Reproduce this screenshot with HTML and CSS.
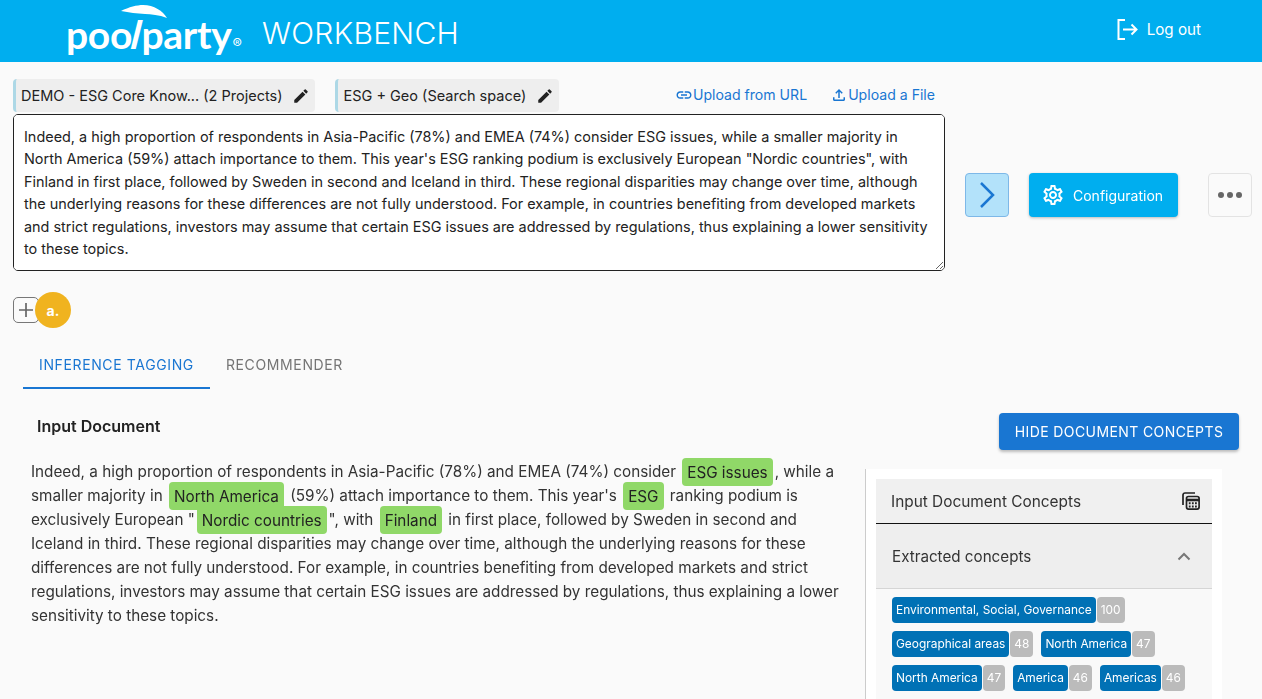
FILE: index.html
```html
<!DOCTYPE html>
<html lang="en">
<head>
    <meta charset="UTF-8">
    <meta name="viewport" content="width=device-width, initial-scale=1.0">
    <title>PoolParty Workbench</title>
    <link rel="stylesheet" href="styles.css">
</head>
<body>
    <header class="topbar">
        <div class="logo">
            <svg class="logo-umbrella" width="48" height="18" viewBox="0 0 48 18"><path d="M0 7C8 3 16 1 22 1 33 1 42 7 46 14 38 11 30 10 24 10 16 9.500 8 8.500 0 7Z" fill="#fff"/></svg>
            <span class="logo-text">poo<span class="logo-pole">l</span>party</span><span class="logo-reg">®</span>
        </div>
        <div class="app-name">WORKBENCH</div>
        <a class="logout" href="#">
            <svg width="21" height="21" viewBox="0 0 21 21" fill="none" stroke="#fff" stroke-width="2"><path d="M8 1H1.500v19H8"/><path d="M6 10.500h13.500M14.500 5.500l5 5-5 5"/></svg>
            Log out
        </a>
    </header>

    <section class="input-area">
        <div class="input-left">
            <div class="toolbar">
                <div class="chip chip-first">
                    <span>DEMO - ESG Core Know... (2 Projects)</span>
                    <svg width="18" height="18" viewBox="0 0 24 24"><path d="M3 17.250V21h3.750L17.810 9.940l-3.750-3.750L3 17.250zM20.710 7.040a1 1 0 0 0 0-1.410l-2.340-2.340a1 1 0 0 0-1.410 0l-1.830 1.830 3.750 3.750 1.830-1.830z" fill="#222"/></svg>
                </div>
                <div class="chip">
                    <span>ESG + Geo (Search space)</span>
                    <svg width="18" height="18" viewBox="0 0 24 24"><path d="M3 17.250V21h3.750L17.810 9.940l-3.750-3.750L3 17.250zM20.710 7.040a1 1 0 0 0 0-1.410l-2.340-2.340a1 1 0 0 0-1.410 0l-1.830 1.830 3.750 3.750 1.830-1.830z" fill="#222"/></svg>
                </div>
                <a class="upload-link upload-link-first" href="#">
                    <svg width="18" height="18" viewBox="0 0 24 24"><path d="M3.900 12c0-1.710 1.390-3.100 3.100-3.100h4V7H7c-2.760 0-5 2.240-5 5s2.240 5 5 5h4v-1.900H7c-1.710 0-3.100-1.390-3.100-3.100zM8 13h8v-2H8v2zm9-6h-4v1.900h4c1.710 0 3.100 1.390 3.100 3.100s-1.390 3.100-3.100 3.100h-4V17h4c2.760 0 5-2.240 5-5s-2.240-5-5-5z" fill="#1976d2"/></svg>Upload from URL
                </a>
                <a class="upload-link" href="#">
                    <svg width="18" height="18" viewBox="0 0 24 24"><path d="M18 15v3H6v-3H4v3c0 1.100.9 2 2 2h12c1.100 0 2-.9 2-2v-3h-2zM7 9l1.410 1.410L11 7.830V16h2V7.830l2.590 2.580L17 9l-5-5-5 5z" fill="#1976d2"/></svg>Upload a File
                </a>
            </div>
            <textarea class="doc-input" spellcheck="false">Indeed, a high proportion of respondents in Asia-Pacific (78%) and EMEA (74%) consider ESG issues, while a smaller majority in North America (59%) attach importance to them. This year's ESG ranking podium is exclusively European "Nordic countries", with Finland in first place, followed by Sweden in second and Iceland in third. These regional disparities may change over time, although the underlying reasons for these differences are not fully understood. For example, in countries benefiting from developed markets and strict regulations, investors may assume that certain ESG issues are addressed by regulations, thus explaining a lower sensitivity to these topics.</textarea>
        </div>
        <div class="input-actions">
            <button class="btn-next" type="button">
                <svg width="18" height="28" viewBox="0 0 18 28" fill="none" stroke="#1976d2" stroke-width="2.500"><path d="M3 2l12 12L3 26"/></svg>
            </button>
            <button class="btn-config" type="button">
                <svg width="24" height="24" viewBox="0 0 24 24"><path d="M19.430 12.980c.04-.32.07-.64.07-.98 0-.34-.03-.66-.07-.98l2.110-1.650c.19-.15.24-.42.12-.64l-2-3.460c-.12-.22-.39-.3-.61-.22l-2.490 1c-.52-.4-1.080-.73-1.690-.98l-.38-2.650A.488.488 0 0 0 14 2h-4c-.25 0-.46.18-.49.42l-.38 2.650c-.61.25-1.170.59-1.690.98l-2.490-1a.566.566 0 0 0-.18-.03c-.17 0-.34.09-.43.25l-2 3.460c-.13.22-.07.49.12.64l2.110 1.650c-.04.32-.07.65-.07.98 0 .33.03.66.07.98l-2.110 1.650c-.19.15-.24.42-.12.64l2 3.460c.12.22.39.3.61.22l2.490-1c.52.4 1.080.73 1.690.98l.38 2.650c.03.24.24.42.49.42h4c.25 0 .46-.18.49-.42l.38-2.650c.61-.25 1.170-.59 1.690-.98l2.490 1c.06.02.12.03.18.03.17 0 .34-.09.43-.25l2-3.460c.12-.22.07-.49-.12-.64l-2.110-1.650zm-1.980-1.710c.04.31.05.52.05.73 0 .21-.02.43-.05.73l-.14 1.130.89.7 1.080.84-.7 1.210-1.270-.51-1.040-.42-.9.68c-.43.32-.84.56-1.250.73l-1.060.43-.16 1.130-.2 1.350h-1.400l-.19-1.350-.16-1.130-1.060-.43c-.43-.18-.83-.41-1.230-.71l-.91-.7-1.060.43-1.270.51-.7-1.210 1.080-.84.89-.7-.14-1.130c-.03-.31-.05-.54-.05-.74s.02-.43.05-.73l.14-1.130-.89-.7-1.080-.84.7-1.210 1.270.51 1.040.42.9-.68c.43-.32.84-.56 1.250-.73l1.060-.43.16-1.130.2-1.350h1.390l.19 1.350.16 1.130 1.060.43c.43.18.83.41 1.230.71l.91.7 1.060-.43 1.270-.51.7 1.210-1.070.85-.89.7.14 1.130zM12 8c-2.210 0-4 1.790-4 4s1.790 4 4 4 4-1.790 4-4-1.790-4-4-4zm0 6c-1.100 0-2-.9-2-2s.9-2 2-2 2 .9 2 2-.9 2-2 2z" fill="#fff"/></svg>
                Configuration
            </button>
            <button class="btn-more" type="button">
                <span class="dot"></span><span class="dot"></span><span class="dot"></span>
            </button>
        </div>
    </section>

    <div class="add-row">
        <button class="btn-add" type="button">
            <svg width="16" height="16" viewBox="0 0 16 16" stroke="#666" stroke-width="1.700"><path d="M8 1v14M1 8h14"/></svg>
        </button>
        <span class="badge">a.</span>
    </div>

    <nav class="tabs">
        <a class="tab tab-active" href="#">Inference Tagging</a>
        <a class="tab" href="#">Recommender</a>
    </nav>

    <section class="results">
        <div class="results-head">
            <h3>Input Document</h3>
            <button class="btn-hide" type="button">Hide Document Concepts</button>
        </div>
        <div class="results-body">
            <p class="doc-text">Indeed, a high proportion of respondents in Asia-Pacific (78%) and EMEA (74%) consider <mark>ESG issues</mark>, while a smaller majority in <mark>North America</mark> (59%) attach importance to them. This year's <mark>ESG</mark> ranking podium is exclusively European "<mark>Nordic countries</mark>", with <mark>Finland</mark> in first place, followed by Sweden in second and Iceland in third. These regional disparities may change over time, although the underlying reasons for these differences are not fully understood. For example, in countries benefiting from developed markets and strict regulations, investors may assume that certain ESG issues are addressed by regulations, thus explaining a lower sensitivity to these topics.</p>
            <aside class="concepts">
                <div class="concepts-title">
                    <span>Input Document Concepts</span>
                    <svg width="18" height="18" viewBox="0 0 18 18" fill="none" stroke="#222" stroke-width="1.700"><path d="M1 13V3a2 2 0 0 1 2-2h10"/><rect x="4.500" y="4.500" width="12.600" height="12.600" rx="2"/><path d="M4.500 8h12.600" stroke-width="2.600"/><path d="M6.800 11.300h1.800M9.900 11.300h1.800M13 11.300h1.800M6.800 14.500h1.800M9.900 14.500h1.800M13 14.500h1.800" stroke-width="2"/></svg>
                </div>
                <div class="concepts-section">
                    <span>Extracted concepts</span>
                    <svg width="14" height="9" viewBox="0 0 14 9" fill="none" stroke="#777" stroke-width="2"><path d="M1.500 7.500L7 2l5.500 5.500"/></svg>
                </div>
                <div class="tag-list">
                    <div class="tag"><span class="tag-name">Environmental, Social, Governance</span><span class="tag-count">100</span></div>
                    <div class="tag"><span class="tag-name">Geographical areas</span><span class="tag-count">48</span></div>
                    <div class="tag"><span class="tag-name">North America</span><span class="tag-count">47</span></div>
                    <div class="tag"><span class="tag-name">North America</span><span class="tag-count">47</span></div>
                    <div class="tag"><span class="tag-name">America</span><span class="tag-count">46</span></div>
                    <div class="tag"><span class="tag-name">Americas</span><span class="tag-count">46</span></div>
                </div>
            </aside>
        </div>
    </section>
</body>
</html>
```

FILE: styles.css
```css
html, body {
    height: 100%;
    overflow: hidden;
}

body {
    margin: 0;
    background-color: #fafafa;
    font-family: Inter, "Liberation Sans", sans-serif;
    color: #222;
}

a {
    text-decoration: none;
}

button {
    font-family: inherit;
    cursor: pointer;
}

/* Header */
.topbar {
    height: 62px;
    background-color: #00aeef;
    display: flex;
    align-items: center;
    padding-left: 68px;
    color: #fff;
}

.logo {
    position: relative;
    display: flex;
    align-items: baseline;
    width: 194px;
    height: 62px;
}

.logo-umbrella {
    position: absolute;
    left: 53px;
    top: 4px;
}

.logo-text {
    margin-left: -2px;
    font-family: Lato, sans-serif;
    font-weight: 700;
    font-size: 39px;
    line-height: 68px;
    letter-spacing: -0.3px;
}

.logo-pole {
    display: inline-block;
    transform: skewX(-14deg);
}

.logo-reg {
    font-size: 14px;
    margin-left: 1px;
}

.app-name {
    font-size: 30px;
    font-weight: 300;
    letter-spacing: 0.3px;
    margin-top: 3px;
}

.logout {
    margin-left: auto;
    margin-right: 61px;
    margin-top: -4px;
    display: flex;
    align-items: center;
    gap: 9px;
    color: #fff;
    font-size: 15.2px;
}

/* Input area */
.input-area {
    display: flex;
    padding: 17px 10px 0 13px;
}

.input-left {
    width: 932px;
}

.toolbar {
    display: flex;
    align-items: center;
    height: 33px;
    margin-bottom: 2px;
}

.chip {
    height: 33px;
    box-sizing: border-box;
    display: flex;
    align-items: center;
    justify-content: space-between;
    gap: 10px;
    padding: 0 5px 0 5px;
    background-color: #eee;
    border-left: 3px solid #add8e6;
    border-radius: 4px;
    font-size: 14.500px;
    margin-right: 20px;
}

.upload-link {
    display: flex;
    align-items: center;
    color: #1976d2;
    font-size: 14.100px;
    margin-top: -2px;
    margin-right: 23px;
}

.upload-link:last-child {
    margin-right: 10px;
}

.upload-link-first {
    margin-left: auto;
}

.doc-input {
    display: block;
    width: 100%;
    height: 157px;
    box-sizing: border-box;
    padding: 11px 10px;
    border: 1px solid #222;
    border-radius: 5px;
    background-color: #fff;
    font-family: inherit;
    font-size: 14.430px;
    line-height: 22.4px;
    color: #222;
    outline: none;
}

.input-actions {
    display: flex;
    align-self: flex-end;
    margin-left: 20px;
    margin-bottom: 54px;
}

.btn-next,
.btn-config,
.btn-more {
    height: 44px;
    box-sizing: border-box;
    border-radius: 4px;
    display: flex;
    align-items: center;
    justify-content: center;
    padding: 0;
}

.btn-next {
    width: 44px;
    background-color: #b3e2fa;
    border: 1px solid #7db8e8;
}

.btn-config {
    width: 149px;
    margin-left: 20px;
    padding-left: 12px;
    justify-content: flex-start;
    gap: 8px;
    background-color: #00aeef;
    border: none;
    color: #fff;
    font-size: 14px;
    box-shadow: 0 1px 3px rgba(0, 0, 0, 0.25);
}

.btn-more {
    width: 44px;
    margin-left: 30px;
    gap: 3px;
    background-color: #fafafa;
    border: 1px solid #e3e3e3;
}

.dot {
    width: 6px;
    height: 6px;
    border-radius: 50%;
    background-color: #666;
}

/* Add row */
.add-row {
    position: relative;
    margin: 26px 0 0 13px;
    height: 26px;
}

.btn-add {
    width: 26px;
    height: 26px;
    padding: 0;
    box-sizing: border-box;
    display: flex;
    align-items: center;
    justify-content: center;
    background-color: #fafafa;
    border: 1px solid #777;
    border-radius: 5px;
}

.badge {
    position: absolute;
    left: 22px;
    top: -5px;
    width: 36px;
    height: 36px;
    border-radius: 50%;
    background-color: #f0b31f;
    color: #fff;
    font-size: 14px;
    font-weight: 700;
    display: flex;
    align-items: center;
    justify-content: center;
}

/* Tabs */
.tabs {
    display: flex;
    margin: 18px 0 0 23px;
}

.tab {
    height: 48px;
    box-sizing: border-box;
    padding: 0 16px;
    display: flex;
    align-items: center;
    text-transform: uppercase;
    font-size: 14px;
    letter-spacing: 0.63px;
    color: #757575;
    border-bottom: 2px solid transparent;
}

.tab-active {
    color: #1976d2;
    border-bottom-color: #1976d2;
}

/* Results */
.results-head {
    display: flex;
    justify-content: space-between;
    align-items: center;
    padding: 24px 23px 0 37px;
}

.results-head h3 {
    margin: 0 0 12px;
    font-size: 16px;
    font-weight: 600;
}

.btn-hide {
    height: 37px;
    width: 240px;
    padding: 0;
    background-color: #1976d2;
    border: none;
    border-radius: 4px;
    color: #fff;
    font-size: 14px;
    letter-spacing: 0.4px;
    text-transform: uppercase;
    box-shadow: 0 2px 3px rgba(0, 0, 0, 0.25);
}

.results-body {
    display: flex;
    align-items: flex-start;
    padding: 10px 0 0 31px;
}

.doc-text {
    width: 812px;
    margin: 0;
    font-size: 15.270px;
    line-height: 24px;
    color: #333;
}

mark {
    background-color: #90d868;
    color: #222;
    border-radius: 4px;
    padding: 4.500px 5px;
    margin: 0 2px 0 2px;
}

.concepts {
    margin: 9px 0 0 22px;
    width: 336px;
    padding: 10px;
    background-color: #fff;
    border-left: 1px solid #ccc;
}

.concepts-title {
    height: 44px;
    display: flex;
    justify-content: space-between;
    align-items: center;
    padding: 0 12px 0 15px;
    background-color: #f0f0f0;
    border-bottom: 1px solid #111;
    font-size: 15.400px;
    color: #333;
}

.concepts-section {
    height: 64px;
    display: flex;
    justify-content: space-between;
    align-items: center;
    padding: 0 21px 0 16px;
    background-color: #eee;
    border-bottom: 1px solid #d5d5d5;
    font-size: 15.200px;
    color: #333;
}

.tag-list {
    display: flex;
    flex-wrap: wrap;
    gap: 8px;
    padding: 8px 16px;
    background-color: #f9f9f9;
}

.tag {
    display: flex;
    gap: 1px;
    height: 26px;
    font-size: 11.900px;
    line-height: 26px;
    color: #fff;
}

.tag-name {
    padding: 0 4px;
    background-color: #0071b5;
    border-radius: 4px;
}

.tag-count {
    padding: 0 4px;
    background-color: #bbb;
    border-radius: 4px;
}
```
